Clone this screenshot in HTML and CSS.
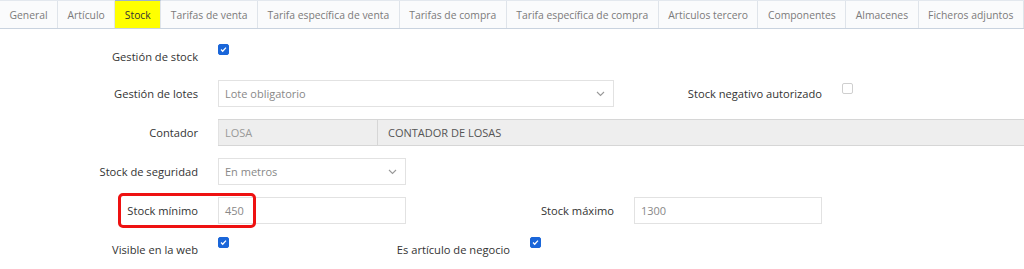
FILE: index.html
```html
<!DOCTYPE html>
<html lang="es">
<head>
  <meta charset="UTF-8">
  <title>Artículo - Stock</title>
  <link rel="stylesheet" href="styles.css">
</head>
<body>
  <ul class="tabs">
    <li class="tab">General</li>
    <li class="tab">Artículo</li>
    <li class="tab active">Stock</li>
    <li class="tab">Tarifas de venta</li>
    <li class="tab">Tarifa específica de venta</li>
    <li class="tab">Tarifas de compra</li>
    <li class="tab">Tarifa específica de compra</li>
    <li class="tab">Articulos tercero</li>
    <li class="tab">Componentes</li>
    <li class="tab">Almacenes</li>
    <li class="tab">Ficheros adjuntos</li>
  </ul>

  <div class="form">

    <div class="row first">
      <label class="label c1">Gestión de stock</label>
      <span class="check checked k3"></span>
    </div>

    <div class="row">
      <label class="label c1">Gestión de lotes</label>
      <div class="select c3-wide">
        <span>Lote obligatorio</span>
        <svg width="9" height="6" viewBox="0 0 9 6"><path d="M1 1l3.5 3.5L8 1" fill="none" stroke="#999" stroke-width="1.1"/></svg>
      </div>
      <label class="label c7">Stock negativo autorizado</label>
      <span class="check k9"></span>
    </div>

    <div class="row">
      <label class="label c1">Contador</label>
      <div class="group c3-full">
        <span class="code">LOSA</span>
        <span class="desc">CONTADOR DE LOSAS</span>
      </div>
    </div>

    <div class="row">
      <label class="label c1">Stock de seguridad</label>
      <div class="select c3">
        <span>En metros</span>
        <svg width="9" height="6" viewBox="0 0 9 6"><path d="M1 1l3.5 3.5L8 1" fill="none" stroke="#999" stroke-width="1.1"/></svg>
      </div>
    </div>

    <div class="row">
      <label class="label c1 marked">Stock mínimo<span class="highlight"></span></label>
      <div class="input c3">450</div>
      <label class="label c5">Stock máximo</label>
      <div class="input c7">1300</div>
    </div>

    <div class="row">
      <label class="label c1">Visible en la web</label>
      <span class="check checked k3"></span>
      <label class="label c4">Es artículo de negocio</label>
      <span class="check checked k6"></span>
    </div>

  </div>
</body>
</html>
```

FILE: styles.css
```css
* {
  box-sizing: border-box;
}
body {
  margin: 0;
  font-family: 'Open Sans', 'DejaVu Sans', sans-serif;
  background: #fff;
  color: #333;
  overflow: hidden;
}
.tabs {
  display: flex;
  margin: 0;
  padding: 0;
  list-style: none;
  height: 29px;
  border-top: 1px solid #e3e8ee;
  border-bottom: 1px solid #c9d3df;
  background: #fafbfc;
}
.tab {
  padding: 1px 9.5px 0;
  line-height: 26px;
  font-size: 10.35px;
  color: #7a7a7a;
  border-right: 1px solid #dfe4ea;
  white-space: nowrap;
}
.tab.active {
  background: #ffff00;
  color: #333;
  margin-top: -1px;
  border-top: 1px solid #9fb2c8;
}
.form {
  padding: 14px 0 0 10px;
}
.row {
  display: grid;
  grid-template-columns: repeat(10, 84px);
  column-gap: 20px;
  height: 27px;
  margin-bottom: 12px;
}
.row.first {
  margin-bottom: 10px;
}
.c1 { grid-column: 1 / 3; }
.c3 { grid-column: 3 / 5; }
.c3-wide { grid-column: 3 / 7; }
.c3-full { grid-column: 3 / -1; }
.c4 { grid-column: 4 / 6; }
.c5 { grid-column: 5 / 7; }
.c7 { grid-column: 7 / 9; }
.k3 { grid-column: 3 / 4; }
.k6 { grid-column: 6 / 7; }
.k9 { grid-column: 9 / 10; }
.label {
  display: flex;
  align-items: center;
  justify-content: flex-end;
  font-size: 11.15px;
  color: #333;
  white-space: nowrap;
}
.check {
  width: 11px;
  height: 11px;
  margin-top: 3px;
  border: 1px solid #cfcfcf;
  border-radius: 2px;
  background: #fff;
}
.check.checked {
  margin-top: 1px;
  border-color: #1a66d9;
  background: #1a66d9 url("data:image/svg+xml;utf8,<svg xmlns='http://www.w3.org/2000/svg' viewBox='0 0 11 11'><path d='M2.5 5.6l2 2 4-4.4' fill='none' stroke='white' stroke-width='1.6'/></svg>") center / 9px 9px no-repeat;
}
.select, .input {
  display: flex;
  align-items: center;
  justify-content: space-between;
  padding: 0 8px 0 6px;
  border: 1px solid #e2e2e2;
  font-size: 11px;
  color: #888;
  background: #fff;
}
.group {
  display: flex;
  font-size: 11px;
  border-top: 1px solid #d6d6d6;
  border-bottom: 1px solid #d6d6d6;
  background: #eee;
}
.group span {
  display: flex;
  align-items: center;
}
.code {
  width: 160px;
  padding-left: 6px;
  color: #999;
  border-left: 1px solid #e2e2e2;
  border-right: 1px solid #d6d6d6;
}
.desc {
  flex: 1;
  padding-left: 10px;
  color: #555;
}
.marked {
  position: relative;
}
.highlight {
  position: absolute;
  left: 108px;
  top: -4px;
  width: 138px;
  height: 35px;
  border: 3px solid #ee1111;
  border-radius: 5px;
  z-index: 2;
}
```
